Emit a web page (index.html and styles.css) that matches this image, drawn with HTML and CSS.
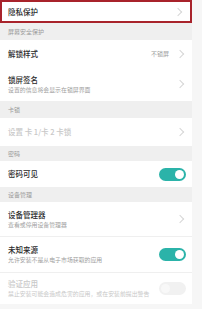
FILE: index.html
```html
<!DOCTYPE html>
<html lang="zh">
<head>
<meta charset="utf-8">
<link rel="stylesheet" href="styles.css">
</head>
<body>
<div class="list">
  <div class="row row-highlight">
    <div class="text"><div class="title">隐私保护</div></div>
    <span class="chev"></span>
  </div>
  <div class="header h1">屏幕安全保护</div>
  <div class="row r-unlock">
    <div class="text"><div class="title">解锁样式</div></div>
    <span class="value">不锁屏</span>
    <span class="chev"></span>
  </div>
  <div class="row r-sign">
    <div class="text"><div class="title">锁屏签名</div><div class="sub">设置的信息将会显示在锁屏界面</div></div>
    <span class="chev"></span>
  </div>
  <div class="header h2">卡锁</div>
  <div class="row r-card disabled">
    <div class="text"><div class="title">设置 卡 1/卡 2 卡锁</div></div>
    <span class="chev"></span>
  </div>
  <div class="header h3">密码</div>
  <div class="row r-pwd">
    <div class="text"><div class="title">密码可见</div></div>
    <span class="toggle on"></span>
  </div>
  <div class="header h4">设备管理</div>
  <div class="row r-dev sep">
    <div class="text"><div class="title">设备管理器</div><div class="sub">查看或停用设备管理器</div></div>
    <span class="chev"></span>
  </div>
  <div class="row r-unknown sep">
    <div class="text"><div class="title">未知来源</div><div class="sub">允许安装不是从电子市场获取的应用</div></div>
    <span class="toggle on"></span>
  </div>
  <div class="row r-verify disabled">
    <div class="text"><div class="title">验证应用</div><div class="sub">禁止安装可能会造成危害的应用，或在安装前提出警告</div></div>
    <span class="toggle off"></span>
  </div>
</div>
</body>
</html>
```
FILE: styles.css
```css
html, body {
  margin: 0;
  padding: 0;
}
body {
  width: 202px;
  height: 309px;
  overflow: hidden;
  background: #f6f6f6;
  font-family: "Noto Sans CJK SC", "Noto Sans", sans-serif;
}
.list {
  width: 192px;
  background: #ffffff;
  display: flex;
  flex-direction: column;
}
.row {
  display: flex;
  align-items: center;
  padding: 0 8px 0 8px;
  background: #fff;
  box-sizing: border-box;
}
.row.sep {
  border-bottom: 1px solid #efefef;
}
.text {
  flex: 1;
  display: flex;
  flex-direction: column;
  gap: 1px;
}
.title {
  font-size: 7.5px;
  line-height: 10px;
  color: #2a2a2a;
  font-weight: 500;
}
.sub {
  font-size: 5.9px;
  line-height: 8px;
  color: #a0a0a0;
}
.disabled .title,
.disabled .sub {
  color: #c8c8c8;
}
.value {
  font-size: 6px;
  color: #a0a0a0;
  margin-right: 8px;
}
.chev {
  width: 5px;
  height: 5px;
  border-top: 1px solid #d6d6d6;
  border-right: 1px solid #d6d6d6;
  transform: rotate(45deg);
  margin-right: 1px;
}
.header {
  background: #efefef;
  color: #9a9a9a;
  font-size: 6px;
  line-height: 8px;
  padding: 1px 8px 0;
  display: flex;
  align-items: center;
  box-sizing: border-box;
}
.row-highlight {
  height: 23px;
  border: 2px solid #a8232b;
  padding-left: 6px;
  padding-right: 6px;
}
.row-highlight .chev {
  margin-right: 3px;
}
.h1 { height: 17px; }
.r-unlock { height: 27px; }
.r-sign { height: 34px; }
.h2 { height: 17px; }
.r-card { height: 28px; }
.h3 { height: 15px; }
.r-pwd { height: 26px; }
.h4 { height: 15px; }
.r-dev { height: 35px; }
.r-unknown { height: 36px; }
.r-verify { height: 31px; }
.toggle {
  position: relative;
  width: 27px;
  height: 13px;
  border-radius: 7px;
  background: #2bb3a9;
  margin-right: -2px;
}
.toggle::after {
  content: "";
  position: absolute;
  top: 2px;
  width: 9px;
  height: 9px;
  border-radius: 50%;
  background: #fff;
}
.toggle.on::after {
  right: 2px;
}
.toggle.off {
  background: #f1f1f1;
}
.toggle.off::after {
  left: 2px;
  background: #f8f8f8;
}
```
